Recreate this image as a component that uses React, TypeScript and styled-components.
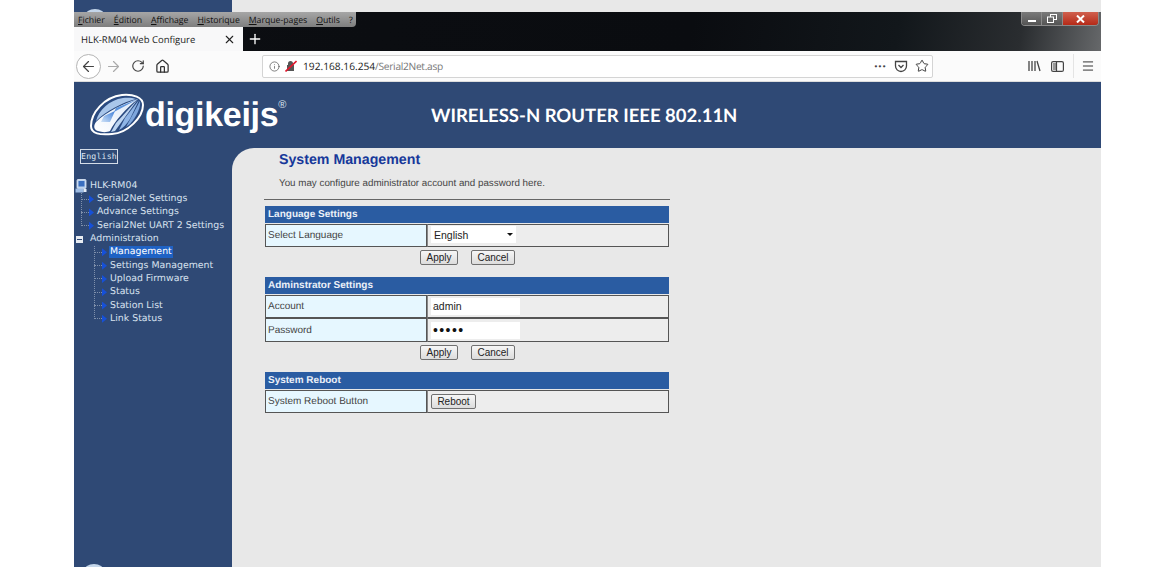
import React from "react";
import styled, {createGlobalStyle} from "styled-components";
import {ArrowLeft, ArrowRight, RotateCw, Home, Info, Star, Menu, X, Plus} from "lucide-react";

const App = () => {
	return (
		<>
			<GlobalStyle/>
			<Frame>
				<TopStrip>
					<TopStripBlue/>
					<TopStripGray/>
				</TopStrip>
				<TitleArea>
					<MenuRow>
						<MenuBar>
							{menuItems.map((m) => <MenuItem key={m}>{m}</MenuItem>)}
						</MenuBar>
						<WindowControls>
							<WinButton>
								<svg width="10" height="8" viewBox="0 0 10 8"><rect x="1" y="5" width="8" height="2" fill="#fff"/></svg>
							</WinButton>
							<WinButton>
								<svg width="10" height="9" viewBox="0 0 10 9" fill="none" stroke="#fff"><rect x="3.5" y="0.5" width="6" height="5"/><rect x="0.5" y="3" width="6" height="5.5" fill="#666"/></svg>
							</WinButton>
							<WinButton $close>
								<svg width="9" height="8" viewBox="0 0 9 8" stroke="#fff" strokeWidth="2"><path d="M1 0.5 L8 7.5 M8 0.5 L1 7.5"/></svg>
							</WinButton>
						</WindowControls>
					</MenuRow>
					<TabRow>
						<Tab>
							<TabTitle>HLK-RM04 Web Configure</TabTitle>
							<X size={13} strokeWidth={2} color="#222"/>
						</Tab>
						<NewTab><Plus size={16} strokeWidth={2} color="#fff"/></NewTab>
					</TabRow>
				</TitleArea>
				<Toolbar>
					<BackButton><ArrowLeft size={17} strokeWidth={1.7} color="#444"/></BackButton>
					<ToolIcon $w={24}><ArrowRight size={17} strokeWidth={1.7} color="#aaa"/></ToolIcon>
					<ToolIcon $w={26}><RotateCw size={14} strokeWidth={2} color="#444"/></ToolIcon>
					<ToolIcon $w={22}><Home size={15} strokeWidth={2} color="#333"/></ToolIcon>
					<UrlBar>
						<Info size={11} strokeWidth={1.6} color="#555"/>
						<svg width="12" height="12" viewBox="0 0 12 12">
							<path d="M3 5 V3.5 a2.5 2.5 0 0 1 5 0 V5 h1 v6 H2 V5 Z" fill="#555"/>
							<path d="M0.5 11.5 L11.5 1" stroke="#e0182d" strokeWidth="1.6"/>
						</svg>
						<UrlText>192.168.16.254<UrlPath>/Serial2Net.asp</UrlPath></UrlText>
						<UrlEnd>
							<Dots>•••</Dots>
							<svg width="14" height="13" viewBox="0 0 14 13" fill="none" stroke="#444" strokeWidth="1.3">
								<path d="M1.5 1.5 H12.5 V6 a5.5 5.5 0 0 1 -11 0 Z"/>
								<path d="M4.5 5 L7 7.5 L9.5 5"/>
							</svg>
							<Star size={14} strokeWidth={1.6} color="#333"/>
						</UrlEnd>
					</UrlBar>
					<RightTools>
						<svg width="13" height="12" viewBox="0 0 13 12" fill="none" stroke="#444" strokeWidth="1.3">
							<path d="M1 1 V11 M4 1 V11 M7 1 V11 M9 1 L12 11"/>
						</svg>
						<svg width="13" height="11" viewBox="0 0 13 11" fill="none" stroke="#444" strokeWidth="1.2">
							<rect x="0.6" y="0.6" width="11.8" height="9.8" rx="1.5"/>
							<rect x="2" y="2" width="3" height="7" fill="#999" stroke="none"/>
							<path d="M5.5 1 V10"/>
						</svg>
						<ToolDivider/>
						<Menu size={14} strokeWidth={1.7} color="#333"/>
					</RightTools>
				</Toolbar>
				<Header>
					<Logo>
						<svg width="56" height="46" viewBox="3 1 56 46">
							<defs>
								<linearGradient id="train" x1="0" y1="1" x2="1" y2="0">
									<stop offset="0" stopColor="#ffffff"/>
									<stop offset="1" stopColor="#dbe8f8"/>
								</linearGradient>
								<linearGradient id="pane" x1="0" y1="1" x2="1" y2="0">
									<stop offset="0" stopColor="#cfe2f8"/>
									<stop offset="1" stopColor="#3f7fd8"/>
								</linearGradient>
							</defs>
							<path d="M5 35 C5 22 18 6 36 4 C47 3 57 6 57 14 C57 26 42 42 26 43 C14 44 5 43 5 35 Z" fill="#2a4a80" stroke="#fff" strokeWidth="2"/>
							<path d="M10 30 C13 19 23 9 37 7 C42 6.5 47 7 50 8 C37 11 20 20 10 30 Z" fill="#a9c6ea"/>
							<path d="M53 9 L44 28 C41 33 37 37 33 39 L39 27 Z" fill="#8fb5e6"/>
							<path d="M54 10 C55 16 51 25 44 33 L40 36 L47 23 Z" fill="#7ea6dc"/>
							<path d="M52 8 C38 12 20 21 10 31 C7 35 8 39 12 40 C16 41.5 21 41.5 24 40 C29 30 40 17 52 8 Z" fill="url(#train)"/>
							<path d="M29 20 L18 25 L15 31 L24 31 Z" fill="url(#pane)"/>
							<path d="M52 8 L30 17 L28 21 Z" fill="#5c93dc"/>
							<path d="M52 8 L30 32 L25 41 L29 40 Z" fill="#bcd4f0"/>
						</svg>
						<LogoText>digikeijs</LogoText>
						<LogoMark>®</LogoMark>
					</Logo>
					<HeaderTitle>WIRELESS-N ROUTER IEEE 802.11N</HeaderTitle>
				</Header>
				<Body>
					<Sidebar>
						<LangBadge>English</LangBadge>
						<Tree>
							<RootRow>
								<svg width="12" height="14" viewBox="0 0 12 14">
									<rect x="2" y="0.5" width="9" height="9" rx="1" fill="#bcd3ee" stroke="#dfeaf8" strokeWidth="0.8"/>
									<rect x="3.5" y="2" width="6" height="5.5" fill="#3a6fc0"/>
									<rect x="0.5" y="9.5" width="8" height="4" fill="#9dbce4"/>
									<rect x="8.5" y="10" width="3" height="3" fill="#e6eef8"/>
								</svg>
								<TreeLabel>HLK-RM04</TreeLabel>
							</RootRow>
							<TreeGroup $line={6}>
								{topItems.map((t) => <TreeItem key={t} $level={1}><Arrow/><TreeLabel>{t}</TreeLabel></TreeItem>)}
							</TreeGroup>
							<AdminRow><MinusBox/><TreeLabel>Administration</TreeLabel></AdminRow>
							<TreeGroup $line={19}>
								{adminItems.map((t) => (
									<TreeItem key={t} $level={2}>
										<Arrow/>
										<TreeLabel $active={t === "Management"}>{t}</TreeLabel>
									</TreeItem>
								))}
							</TreeGroup>
						</Tree>
					</Sidebar>
					<Content>
						<PageTitle>System Management</PageTitle>
						<Intro>You may configure administrator account and password here.</Intro>
						<Rule/>
						<Section>
							<SectionHead>Language Settings</SectionHead>
							<Row>
								<Label>Select Language</Label>
								<Value>
									<SelectWrap>
										<Select defaultValue="English"><option>English</option></Select>
									</SelectWrap>
								</Value>
							</Row>
							<Actions><Btn $w={38}>Apply</Btn><Btn $w={44}>Cancel</Btn></Actions>
						</Section>
						<Section>
							<SectionHead>Adminstrator Settings</SectionHead>
							<Row>
								<Label>Account</Label>
								<Value><Field type="text" defaultValue="admin"/></Value>
							</Row>
							<Row>
								<Label>Password</Label>
								<Value><Field type="password" defaultValue="admin"/></Value>
							</Row>
							<Actions><Btn $w={38}>Apply</Btn><Btn $w={44}>Cancel</Btn></Actions>
						</Section>
						<Section>
							<SectionHead>System Reboot</SectionHead>
							<Row>
								<Label>System Reboot Button</Label>
								<Value><Btn $w={45}>Reboot</Btn></Value>
							</Row>
						</Section>
					</Content>
				</Body>
			</Frame>
		</>
	)
}

export default App

const menuItems = ["Fichier", "Édition", "Affichage", "Historique", "Marque-pages", "Outils", "?"];
const topItems = ["Serial2Net Settings", "Advance Settings", "Serial2Net UART 2 Settings"];
const adminItems = ["Management", "Settings Management", "Upload Firmware", "Status", "Station List", "Link Status"];

const BLUE = "#2f4975";
const PAGE = "#e8e8e8";

const GlobalStyle = createGlobalStyle`
  html, body {
    margin: 0;
    padding: 0;
    background: #fff;
    overflow: hidden;
  }
  * {
    box-sizing: border-box;
  }
`

const Frame = styled.div`
  margin-left: 74px;
  width: 1027px;
  height: 567px;
  display: flex;
  flex-direction: column;
  overflow: hidden;
  font-family: "Liberation Sans", Arial, sans-serif;
  text-rendering: geometricPrecision;
`

const TopStrip = styled.div`
  height: 12px;
  display: flex;
  flex-shrink: 0;
`

const TopStripBlue = styled.div`
  width: 158px;
  background: ${BLUE};
  position: relative;
  overflow: hidden;

  &::after {
    content: "";
    position: absolute;
    left: 11px;
    top: 9px;
    width: 20px;
    height: 14px;
    border-radius: 50%;
    background: #c4d6ea;
  }
`

const TopStripGray = styled.div`
  flex: 1;
  background: ${PAGE};
`

const TitleArea = styled.div`
  height: 39px;
  flex-shrink: 0;
  display: flex;
  flex-direction: column;
  background: linear-gradient(100deg, #0c0e12 0%, #0a0c10 60%, #12171b 80%, #2a2d30 92%, #66686a 100%);
`

const MenuRow = styled.div`
  height: 14px;
  display: flex;
  justify-content: space-between;
`

const MenuBar = styled.div`
  width: 282px;
  height: 15px;
  display: flex;
  align-items: center;
  gap: 9px;
  padding-left: 4px;
  background: linear-gradient(#a6a6a6, #7e7e7e);
  border-radius: 0 0 4px 0;
  position: relative;
  z-index: 1;
`

const MenuItem = styled.span`
  font-family: "Open Sans", sans-serif;
  font-size: 8.7px;
  white-space: nowrap;
  color: #111;
  &::first-letter {
    text-decoration: underline;
  }
`

const WindowControls = styled.div`
  display: flex;
  margin-right: 2px;
  height: 14px;
  width: 78px;
  border: 1px solid #8a8a8a;
  border-top: none;
  border-radius: 0 0 4px 4px;
  overflow: hidden;
`

const WinButton = styled.div<{$close?: boolean}>`
  width: ${({$close}) => ($close ? "36px" : "21px")};
  display: flex;
  align-items: center;
  justify-content: center;
  background: ${({$close}) => ($close ? "linear-gradient(#d0604e, #b52a18)" : "linear-gradient(#7a7a7a, #555)")};
  border-right: 1px solid #8a8a8a;
  &:last-child {
    border-right: none;
  }
`

const TabRow = styled.div`
  height: 25px;
  display: flex;
`

const Tab = styled.div`
  width: 169px;
  background: #f8f8f9;
  border-top: 1px solid #3a8fe0;
  display: flex;
  align-items: center;
  justify-content: space-between;
  padding: 0 7px 0 7px;
`

const TabTitle = styled.span`
  font-family: "Open Sans", sans-serif;
  font-size: 9.5px;
  color: #222;
`

const NewTab = styled.div`
  width: 24px;
  display: flex;
  align-items: center;
  justify-content: center;
`

const Toolbar = styled.div`
  height: 31px;
  flex-shrink: 0;
  display: flex;
  align-items: center;
  background: #fbfbfb;
  padding-left: 2px;
  border-bottom: 1px solid #ddd;
`

const BackButton = styled.div`
  width: 25px;
  height: 25px;
  border-radius: 50%;
  border: 1px solid #b5b5b5;
  background: #fff;
  display: flex;
  align-items: center;
  justify-content: center;
`

const ToolIcon = styled.div<{$w: number}>`
  width: ${({$w}) => $w}px;
  display: flex;
  justify-content: center;
`

const UrlBar = styled.div`
  width: 671px;
  height: 23px;
  margin-left: 89px;
  background: #fff;
  border: 1px solid #d4d4d4;
  border-radius: 2px;
  display: flex;
  align-items: center;
  gap: 5px;
  padding: 0 3px 0 6px;
`

const UrlText = styled.span`
  font-family: "Open Sans", sans-serif;
  font-size: 10.2px;
  color: #222;
  margin-left: 1px;
`

const UrlPath = styled.span`
  color: #777;
  letter-spacing: -0.3px;
`

const UrlEnd = styled.div`
  margin-left: auto;
  display: flex;
  align-items: center;
  gap: 7px;
`

const Dots = styled.span`
  font-size: 8px;
  letter-spacing: 1.4px;
  color: #444;
`

const RightTools = styled.div`
  margin-left: 95px;
  display: flex;
  align-items: center;
  gap: 10px;
`

const ToolDivider = styled.div`
  width: 1px;
  height: 24px;
  margin: 0 -3px 0 -1px;
  background: #e4e4e4;
`

const Header = styled.div`
  height: 66px;
  flex-shrink: 0;
  background: ${BLUE};
  display: flex;
  align-items: center;
`

const Logo = styled.div`
  width: 357px;
  display: flex;
  align-items: center;
  padding-left: 15px;
`

const LogoText = styled.span`
  font-size: 34px;
  font-weight: 700;
  color: #fff;
  letter-spacing: -0.3px;
`

const LogoMark = styled.span`
  font-size: 11px;
  color: #dfe6f0;
  align-self: flex-start;
  margin-top: 7px;
`

const HeaderTitle = styled.h1`
  margin: 0;
  font-family: Lato, "Open Sans", sans-serif;
  font-size: 18.5px;
  font-weight: 700;
  color: #fff;
`

const Body = styled.div`
  flex: 1;
  display: flex;
  background: ${BLUE};
  min-height: 0;
`

const Sidebar = styled.div`
  width: 158px;
  flex-shrink: 0;
  padding: 1px 0 0 6px;
  position: relative;
  overflow: hidden;

  &::after {
    content: "";
    position: absolute;
    left: 10px;
    bottom: -11px;
    width: 20px;
    height: 14px;
    border-radius: 50%;
    background: #c4d6ea;
  }
`

const LangBadge = styled.div`
  width: 38px;
  height: 15px;
  border: 1px solid #d5dde8;
  color: #dfe7f2;
  font-family: "DejaVu Sans Mono", monospace;
  font-size: 8.2px;
  letter-spacing: 0.2px;
  line-height: 13px;
  text-align: center;
`

const Tree = styled.div`
  margin-top: 15px;
  margin-left: -5px;
  font-family: "DejaVu Sans", sans-serif;
  font-size: 9.4px;
  color: #d8e2ef;
`

const RootRow = styled.div`
  height: 13.5px;
  display: flex;
  align-items: center;
  gap: 2px;
`

const AdminRow = styled.div`
  height: 13.3px;
  display: flex;
  align-items: center;
  gap: 6px;
  padding-left: 1px;
`

const MinusBox = styled.span`
  width: 7px;
  height: 7px;
  background: #e8ecf2;
  display: flex;
  align-items: center;
  justify-content: center;

  &::after {
    content: "";
    width: 5px;
    height: 1px;
    background: #2f4975;
  }
`

const TreeGroup = styled.div<{$line: number}>`
  position: relative;

  &::before {
    content: "";
    position: absolute;
    left: ${({$line}) => $line}px;
    top: 0;
    height: calc(100% - 6px);
    border-left: 1px dotted #7f90ab;
  }
`

const TreeItem = styled.div<{$level: number}>`
  height: 13.3px;
  display: flex;
  align-items: center;
  padding-left: ${({$level}) => ($level === 1 ? 14 : 27)}px;
  gap: 2px;
  position: relative;

  &::before {
    content: "";
    position: absolute;
    left: ${({$level}) => ($level === 1 ? 6 : 19)}px;
    top: 6px;
    width: 8px;
    border-top: 1px dotted #7f90ab;
  }
`

const Arrow = styled.i`
  display: block;
  flex: 0 0 5px;
  width: 5px;
  height: 8px;
  background: #1650d8;
  clip-path: polygon(0 0, 100% 50%, 0 100%);
  position: relative;
  z-index: 1;
`

const TreeLabel = styled.span<{$active?: boolean}>`
  line-height: 12px;
  padding: 0 1px;
  white-space: nowrap;
  background: ${({$active}) => ($active ? "#1f62c4" : "transparent")};
  color: ${({$active}) => ($active ? "#fff" : "#d8e2ef")};
`

const Content = styled.div`
  flex: 1;
  background: ${PAGE};
  border-top-left-radius: 22px;
  padding: 4px 0 0 32px;
  color: #444;
`

const PageTitle = styled.h2`
  margin: 0 0 0 15px;
  font-size: 14.2px;
  line-height: 16px;
  font-weight: 700;
  color: #17389a;
`

const Intro = styled.p`
  margin: 10px 0 0 15px;
  font-size: 9.8px;
  line-height: 12px;
  color: #444;
`

const Rule = styled.div`
  width: 406px;
  height: 1px;
  margin-top: 9px;
  background: #666;
`

const Section = styled.section`
  width: 404px;
  margin: 6px 0 0 1px;
  & + & {
    margin-top: 12px;
  }
`

const SectionHead = styled.div`
  height: 17px;
  padding-left: 3px;
  background: #2a5ca2;
  color: #eaf0f8;
  font-size: 10px;
  font-weight: 700;
  line-height: 17px;
  margin-bottom: 1px;
`

const Row = styled.div`
  display: grid;
  grid-template-columns: 162px 1fr;
  height: 23px;
  & + & {
    height: 24px;
  }
`

const Label = styled.div`
  background: #e6f7ff;
  border: 1px solid #555;
  padding-left: 2px;
  font-size: 10px;
  display: flex;
  align-items: center;
  color: #444;
`

const Value = styled.div`
  background: #ededed;
  border: 1px solid #555;
  border-left: 1px solid #888;
  padding-left: 3px;
  display: flex;
  align-items: center;
`

const SelectWrap = styled.div`
  width: 85px;
  height: 17px;
  align-self: flex-start;
  margin-top: 1px;
  position: relative;

  &::after {
    content: "";
    position: absolute;
    right: 3px;
    top: 7px;
    border-left: 3px solid transparent;
    border-right: 3px solid transparent;
    border-top: 3px solid #111;
  }
`

const Select = styled.select`
  appearance: none;
  display: block;
  width: 100%;
  height: 17px;
  border: none;
  background: #fff;
  padding: 0 3px;
  font-family: "Liberation Sans", Arial, sans-serif;
  font-size: 10.5px;
  color: #222;
  outline: none;
`

const Field = styled.input`
  width: 89px;
  height: 17px;
  border: none;
  outline: none;
  background: #fff;
  padding: 0 2px 1px;
  font-family: "Liberation Sans", Arial, sans-serif;
  font-size: 10.5px;
  color: #222;

  &[type="password"] {
    font-size: 14px;
    letter-spacing: 1.4px;
    color: #111;
  }
`

const Actions = styled.div`
  display: flex;
  gap: 13px;
  padding: 3px 0 0 155px;
`

const Btn = styled.button<{$w: number}>`
  width: ${({$w}) => $w}px;
  height: 15px;
  padding: 0;
  border: 1px solid #707070;
  border-radius: 2px;
  background: linear-gradient(#f6f6f6, #dcdcdc);
  font-family: "Liberation Sans", Arial, sans-serif;
  font-size: 10px;
  line-height: 13px;
  color: #222;
`
